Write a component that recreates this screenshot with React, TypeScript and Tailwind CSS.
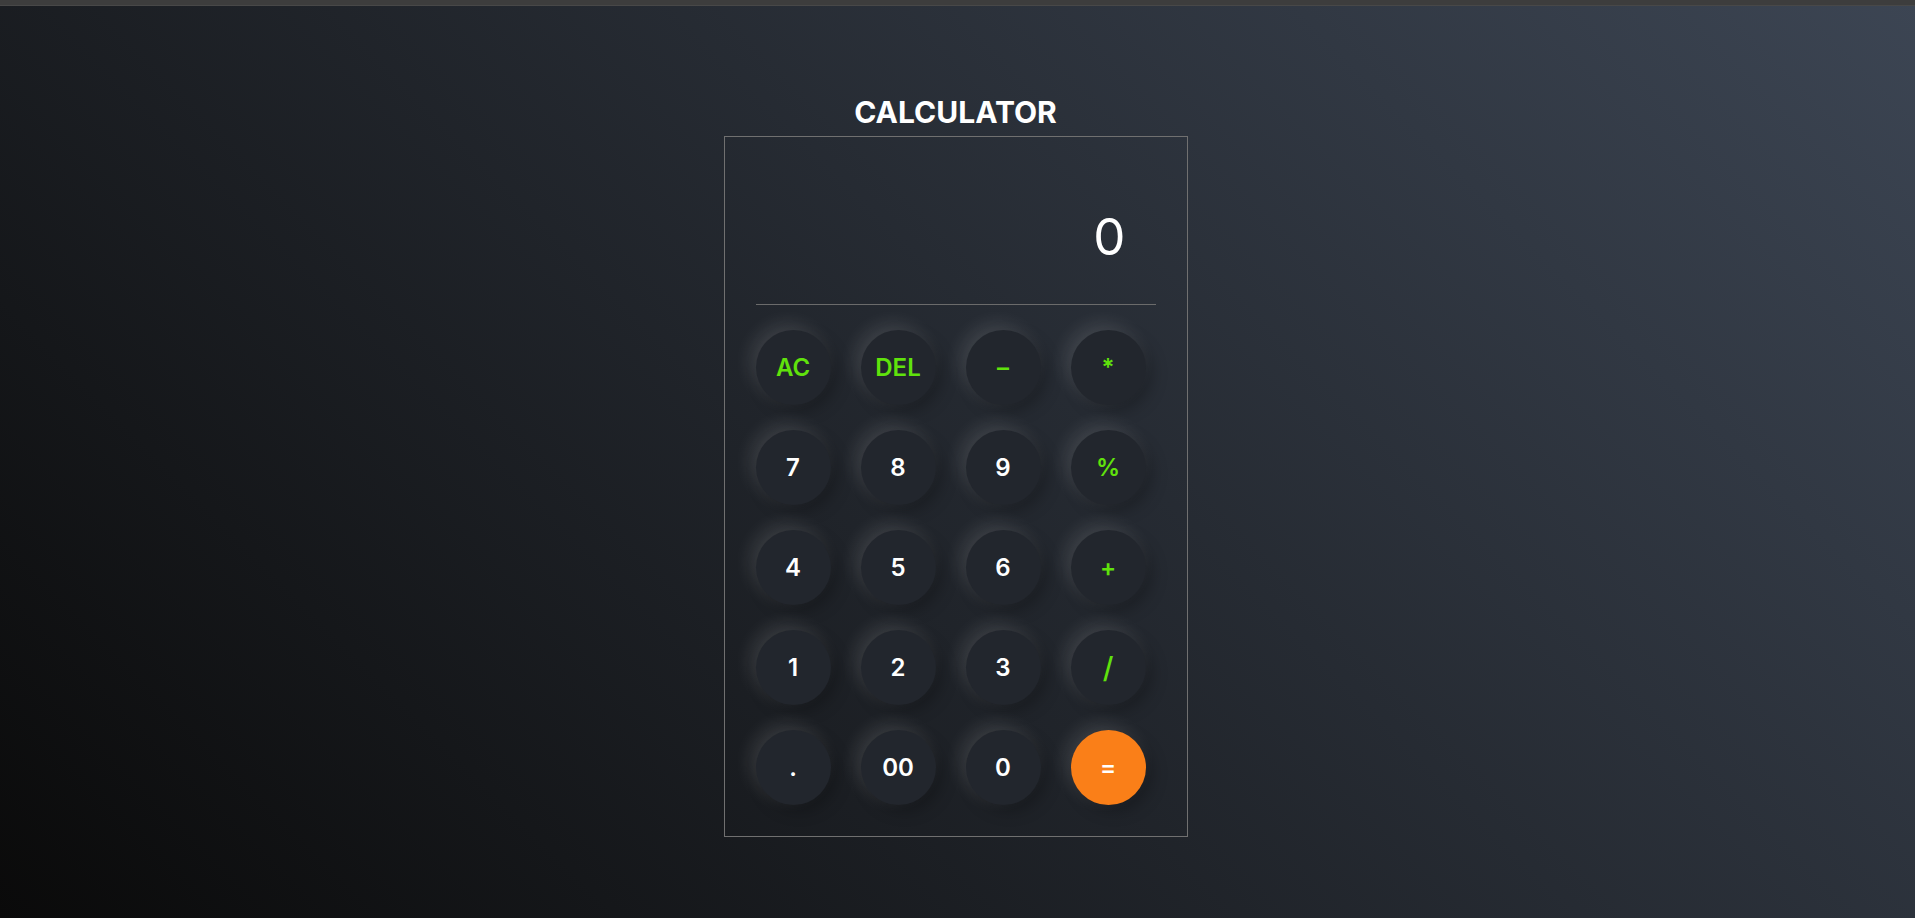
import { useState } from "react";

type Key = {
  label: string;
  kind: "num" | "op" | "eq";
  text?: string;
};

const keys: Key[] = [
  { label: "AC", kind: "op" },
  { label: "DEL", kind: "op" },
  { label: "-", kind: "op", text: "–" },
  { label: "*", kind: "op" },
  { label: "7", kind: "num" },
  { label: "8", kind: "num" },
  { label: "9", kind: "num" },
  { label: "%", kind: "op" },
  { label: "4", kind: "num" },
  { label: "5", kind: "num" },
  { label: "6", kind: "num" },
  { label: "+", kind: "op" },
  { label: "1", kind: "num" },
  { label: "2", kind: "num" },
  { label: "3", kind: "num" },
  { label: "/", kind: "op" },
  { label: ".", kind: "num" },
  { label: "00", kind: "num" },
  { label: "0", kind: "num" },
  { label: "=", kind: "eq" },
];

const CalcButton = ({ item, onPress }: { item: Key; onPress: (k: string) => void }) => {
  const color =
    item.kind === "eq"
      ? "bg-[#fa7f18] text-white"
      : item.kind === "op"
      ? "bg-[#22262d] text-[#60e20c]"
      : "bg-[#22262d] text-white";

  return (
    <button
      type="button"
      onClick={() => onPress(item.label)}
      className={`w-[75px] h-[75px] rounded-full flex items-center justify-center shadow-[-6px_-6px_18px_rgba(255,255,255,0.12),6px_6px_16px_rgba(0,0,0,0.25)] ${
        item.label === "/" ? "text-[29px] font-medium" : "text-[24px] font-semibold"
      } ${color}`}
    >
      {item.text ?? item.label}
    </button>
  );
};

export default function App() {
  const [display, setDisplay] = useState("0");

  const handlePress = (k: string) => {
    if (k === "AC") return setDisplay("0");
    if (k === "DEL") return setDisplay((d) => (d.length > 1 ? d.slice(0, -1) : "0"));
    if (k === "=") {
      try {
        const result = Function(`return (${display})`)();
        setDisplay(String(result));
      } catch {
        setDisplay("0");
      }
      return;
    }
    setDisplay((d) => (d === "0" && k !== "." ? k : d + k));
  };

  return (
    <div className="min-h-screen flex flex-col bg-[linear-gradient(45deg,#0a0a0a,#3c4553)] font-['Inter',sans-serif]">
      <div className="h-[6px] bg-[#3d3d3d] border-b border-[#484848]" />
      <div className="flex flex-col items-center pt-[88px] pr-[4px]">
        <h1 className="text-[30px] leading-[36px] font-bold text-white mb-[6px]">
          CALCULATOR
        </h1>
        <div className="w-[464px] h-[701px] border border-[#707070] px-[31px] pt-[32px]">
          <div className="h-[136px] flex items-center justify-end pr-[30px] border-b border-[#6b6b6b]">
            <span className="text-[51px] text-white leading-none">{display}</span>
          </div>
          <div className="mt-[25px] grid grid-cols-[repeat(4,75px)] gap-x-[30px] gap-y-[25px]">
            {keys.map((k) => (
              <CalcButton key={k.label} item={k} onPress={handlePress} />
            ))}
          </div>
        </div>
      </div>
    </div>
  );
}
